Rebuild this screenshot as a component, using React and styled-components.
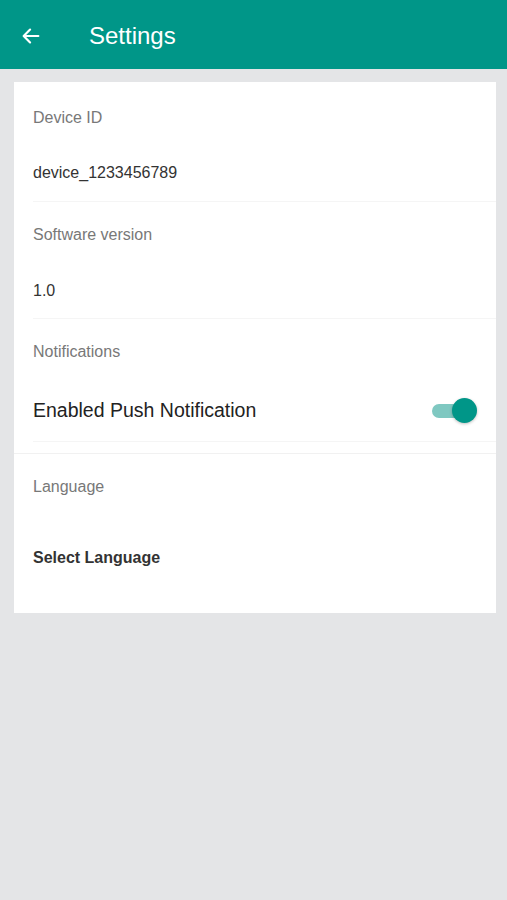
import React from "react";
import styled, { createGlobalStyle } from "styled-components";

const Global = createGlobalStyle`
  html, body { margin: 0; padding: 0; background: #e4e5e7; }
  body { font-family: "Liberation Sans", Arial, sans-serif; }
`;

const Page = styled.div`
  min-height: 900px;
  background: #e4e5e7;
`;

const Header = styled.header`
  height: 69px;
  background: #009688;
  display: flex;
  align-items: center;
  padding-left: 19px;
  padding-top: 2px;
  box-sizing: border-box;
`;

const BackButton = styled.button`
  background: none;
  border: 0;
  padding: 0;
  width: 24px;
  height: 24px;
  display: flex;
  align-items: center;
  justify-content: center;
  cursor: pointer;
`;

const Title = styled.h1`
  margin: 0 0 0 46px;
  color: #fff;
  font-size: 24px;
  font-weight: 400;
`;

const Card = styled.div`
  margin: 13px 11px 0 14px;
  background: #fff;
  padding-bottom: 45px;
`;

const Section = styled.div`
  padding: ${(p) => p.$top}px 0 0 0;
  border-bottom: ${(p) => (p.$full ? "1px solid #f1f1f1" : "none")};
`;

const Inner = styled.div`
  margin-left: 19px;
  padding-bottom: ${(p) => p.$bottom}px;
  border-bottom: ${(p) => (p.$line ? "1px solid #f5f5f5" : "none")};
`;

const Label = styled.div`
  color: #787878;
  font-size: 16px;
  line-height: 20px;
`;

const Value = styled.div`
  margin-top: ${(p) => p.$gap}px;
  color: #333;
  font-size: 16px;
  line-height: 20px;
  font-weight: ${(p) => (p.$bold ? 700 : 400)};
`;

const ToggleRow = styled.div`
  margin-top: 36px;
  display: flex;
  align-items: center;
  justify-content: space-between;
  padding-right: 19px;
  height: 24px;
`;

const ToggleText = styled.span`
  font-size: 19.5px;
  color: #222;
`;

const Switch = styled.div`
  position: relative;
  width: 45px;
  height: 25px;
`;

const Track = styled.div`
  position: absolute;
  left: 0;
  top: 6px;
  width: 38px;
  height: 14px;
  border-radius: 7px;
  background: #7fc8c1;
`;

const Knob = styled.div`
  position: absolute;
  right: 0;
  top: 0;
  width: 25px;
  height: 25px;
  border-radius: 50%;
  background: #009688;
  box-shadow: 0 1px 3px rgba(0, 0, 0, 0.25);
`;

const Spacer = styled.div`
  height: 11px;
`;

export default function App() {
  return (
    <Page>
      <Global />
      <Header>
        <BackButton aria-label="back">
          <svg width="22" height="22" viewBox="0 0 24 24" fill="none">
            <path d="M20 12H5M11 5l-7 7 7 7" stroke="#fff" strokeWidth="2.4" strokeLinecap="round" strokeLinejoin="round" />
          </svg>
        </BackButton>
        <Title>Settings</Title>
      </Header>
      <Card>
        <Section $top={26}>
          <Inner $bottom={18} $line>
            <Label>Device ID</Label>
            <Value $gap={35}>device_1233456789</Value>
          </Inner>
        </Section>
        <Section $top={23}>
          <Inner $bottom={17} $line>
            <Label>Software version</Label>
            <Value $gap={36}>1.0</Value>
          </Inner>
        </Section>
        <Section $top={23} $full>
          <Inner $bottom={19} $line>
            <Label>Notifications</Label>
            <ToggleRow>
              <ToggleText>Enabled Push Notification</ToggleText>
              <Switch>
                <Track />
                <Knob />
              </Switch>
            </ToggleRow>
          </Inner>
          <Spacer />
        </Section>
        <Section $top={23}>
          <Inner $bottom={0}>
            <Label>Language</Label>
            <Value $gap={51} $bold>Select Language</Value>
          </Inner>
        </Section>
      </Card>
    </Page>
  );
}
